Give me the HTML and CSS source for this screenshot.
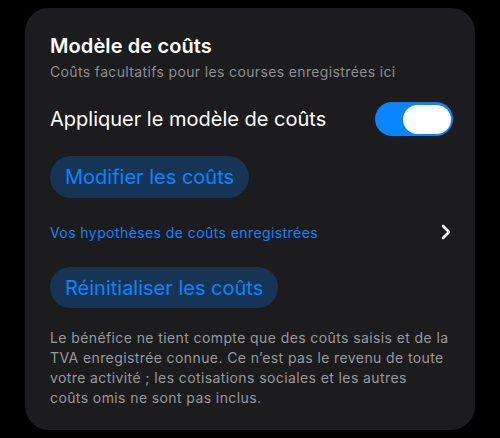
FILE: index.html
```html
<!DOCTYPE html>
<html lang="fr">
<head>
<meta charset="utf-8">
<link rel="stylesheet" href="styles.css">
</head>
<body>
<section class="card">
  <h2 class="title">Modèle de coûts</h2>
  <p class="subtitle">Coûts facultatifs pour les courses enregistrées ici</p>
  <div class="toggle-row">
    <span class="toggle-label">Appliquer le modèle de coûts</span>
    <span class="switch"><span class="knob"></span></span>
  </div>
  <button class="pill pill-modify">Modifier les coûts</button>
  <div class="link-row">
    <span class="link">Vos hypothèses de coûts enregistrées</span>
    <svg class="chevron" width="10" height="16" viewBox="0 0 10 16"><path d="M2 2 L8 8 L2 14" fill="none" stroke="#ffffff" stroke-width="2.6" stroke-linecap="round" stroke-linejoin="round"/></svg>
  </div>
  <button class="pill pill-reset">Réinitialiser les coûts</button>
  <p class="note">Le bénéfice ne tient compte que des coûts saisis et de la TVA enregistrée connue. Ce n’est pas le revenu de toute votre activité ; les cotisations sociales et les autres coûts&nbsp;omis ne sont pas inclus.</p>
</section>
</body>
</html>
```
FILE: styles.css
```css
html, body {
  margin: 0;
  padding: 0;
  background: #000000;
}
body {
  font-family: Inter, "Noto Sans", "Liberation Sans", sans-serif;
  width: 500px;
  height: 438px;
  overflow: hidden;
}
.card {
  box-sizing: border-box;
  margin: 8px 25px 0 25px;
  width: 450px;
  height: 422px;
  background: #1c1c1e;
  border-radius: 24px;
  padding: 26px 22px 0 25px;
  display: flex;
  flex-direction: column;
  align-items: flex-start;
}
.title {
  margin: 0;
  font-size: 20px;
  line-height: 24px;
  font-weight: 600;
  color: #ffffff;
  letter-spacing: 0.1px;
}
.subtitle {
  margin: 5px 0 0 0;
  font-size: 14px;
  line-height: 18px;
  color: #8d8d93;
  letter-spacing: 0.36px;
}
.toggle-row {
  margin-top: 21px;
  align-self: stretch;
  display: flex;
  align-items: center;
  justify-content: space-between;
  height: 34px;
}
.toggle-label {
  font-size: 20px;
  color: #ffffff;
}
.switch {
  width: 78px;
  height: 34px;
  border-radius: 17px;
  background: #0a84ff;
  display: flex;
  align-items: center;
  justify-content: flex-end;
  padding-right: 2px;
  box-sizing: border-box;
}
.knob {
  width: 48px;
  height: 29px;
  border-radius: 15px;
  background: #ffffff;
}
.pill {
  border: none;
  font-family: inherit;
  background: #163555;
  color: #0a84ff;
  font-size: 20px;
  height: 42px;
  border-radius: 21px;
  padding: 0 15px;
  line-height: 42px;
}
.pill-modify {
  margin-top: 20px;
}
.pill-reset {
  margin-top: 23px;
  height: 41px;
}
.link-row {
  margin-top: 22px;
  align-self: stretch;
  display: flex;
  align-items: center;
  justify-content: space-between;
  height: 24px;
}
.link {
  font-size: 14px;
  color: #0a84ff;
  letter-spacing: 0.42px;
}
.chevron {
  margin-right: 2px;
}
.note {
  margin: 20px 0 0 0;
  font-size: 14px;
  line-height: 20px;
  color: #98989e;
  letter-spacing: 0.4px;
}
```
